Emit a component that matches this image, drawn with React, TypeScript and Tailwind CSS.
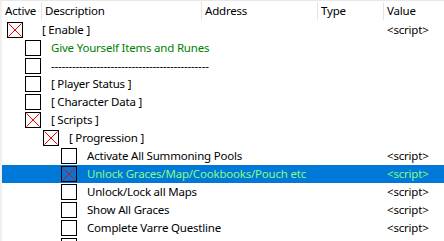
import React from "react";

type Row = {
  level: number;
  text: string;
  checked?: boolean;
  selected?: boolean;
  green?: boolean;
  value?: string;
};

const rows: Row[] = [
  { level: 0, checked: true, text: "[ Enable ]", value: "<script>" },
  { level: 1, text: "Give Yourself Items and Runes", green: true },
  { level: 1, text: "---------------------------------------------" },
  { level: 1, text: "[ Player Status ]" },
  { level: 1, text: "[ Character Data ]" },
  { level: 1, checked: true, text: "[ Scripts ]" },
  { level: 2, checked: true, text: "[ Progression ]" },
  { level: 3, text: "Activate All Summoning Pools", value: "<script>" },
  { level: 3, checked: true, selected: true, text: "Unlock Graces/Map/Cookbooks/Pouch etc", value: "<script>" },
  { level: 3, text: "Unlock/Lock all Maps", value: "<script>" },
  { level: 3, text: "Show All Graces", value: "<script>" },
  { level: 3, text: "Complete Varre Questline", value: "<script>" },
  { level: 3, text: "" },
];

const indent = ["pl-[5px]", "pl-[23px]", "pl-[41px]", "pl-[59px]"];

function Check({ checked, selected }: { checked?: boolean; selected?: boolean }) {
  return (
    <svg width="16" height="16" viewBox="0 0 16 16" className="shrink-0 block">
      <rect x="0.5" y="0.5" width="15" height="15" fill={selected ? "#0078d7" : "#ffffff"} stroke="#000000" />
      {checked && (
        <>
          <line x1="1.5" y1="1.5" x2="14.5" y2="14.5" stroke="#ff0000" strokeWidth="1" />
          <line x1="14.5" y1="1.5" x2="1.5" y2="14.5" stroke="#ff0000" strokeWidth="1" />
        </>
      )}
    </svg>
  );
}

function HeaderCell({ label, w, first }: { label: string; w: string; first?: boolean }) {
  return (
    <div className={`flex items-center h-full ${w} shrink-0`}>
      {!first && <div className="w-px h-[18px] bg-[#e5e5e5] shrink-0" />}
      <span className="pl-[3px]">{label}</span>
    </div>
  );
}

export default function App() {
  return (
    <div
      className="w-[444px] h-[241px] overflow-hidden bg-white border-l-2 border-t border-l-[#f0f0f0] border-t-[#e8e8e8] text-[11.5px] tracking-[-0.2px] text-black leading-none"
      style={{ fontFamily: '"Noto Sans", "Open Sans", sans-serif' }}
    >
      <div className="flex h-[20px] items-center">
        <HeaderCell label="Active" w="w-[39px]" first />
        <HeaderCell label="Description" w="w-[160px]" />
        <HeaderCell label="Address" w="w-[116px]" />
        <HeaderCell label="Type" w="w-[66px]" />
        <HeaderCell label="Value" w="flex-1" />
      </div>
      <div className="flex flex-col">
        {rows.map((r, i) => (
          <div key={i} className={`flex h-[18px] items-center ${r.selected ? "bg-[#0078d7]" : ""}`}>
            <div className={`flex items-center w-[381px] shrink-0 whitespace-nowrap ${indent[r.level]}`}>
              <Check checked={r.checked} selected={r.selected} />
              <span
                className={`${r.level === 0 ? "ml-[19px]" : "ml-[10px]"} ${
                  r.selected ? "text-[#80ff80]" : r.green ? "text-[#008000]" : "text-black"
                }`}
              >
                {r.text}
              </span>
            </div>
            <div className={`pl-[4px] whitespace-nowrap ${r.selected ? "text-[#80ff80]" : "text-black"}`}>
              {r.value ?? ""}
            </div>
          </div>
        ))}
      </div>
    </div>
  );
}
